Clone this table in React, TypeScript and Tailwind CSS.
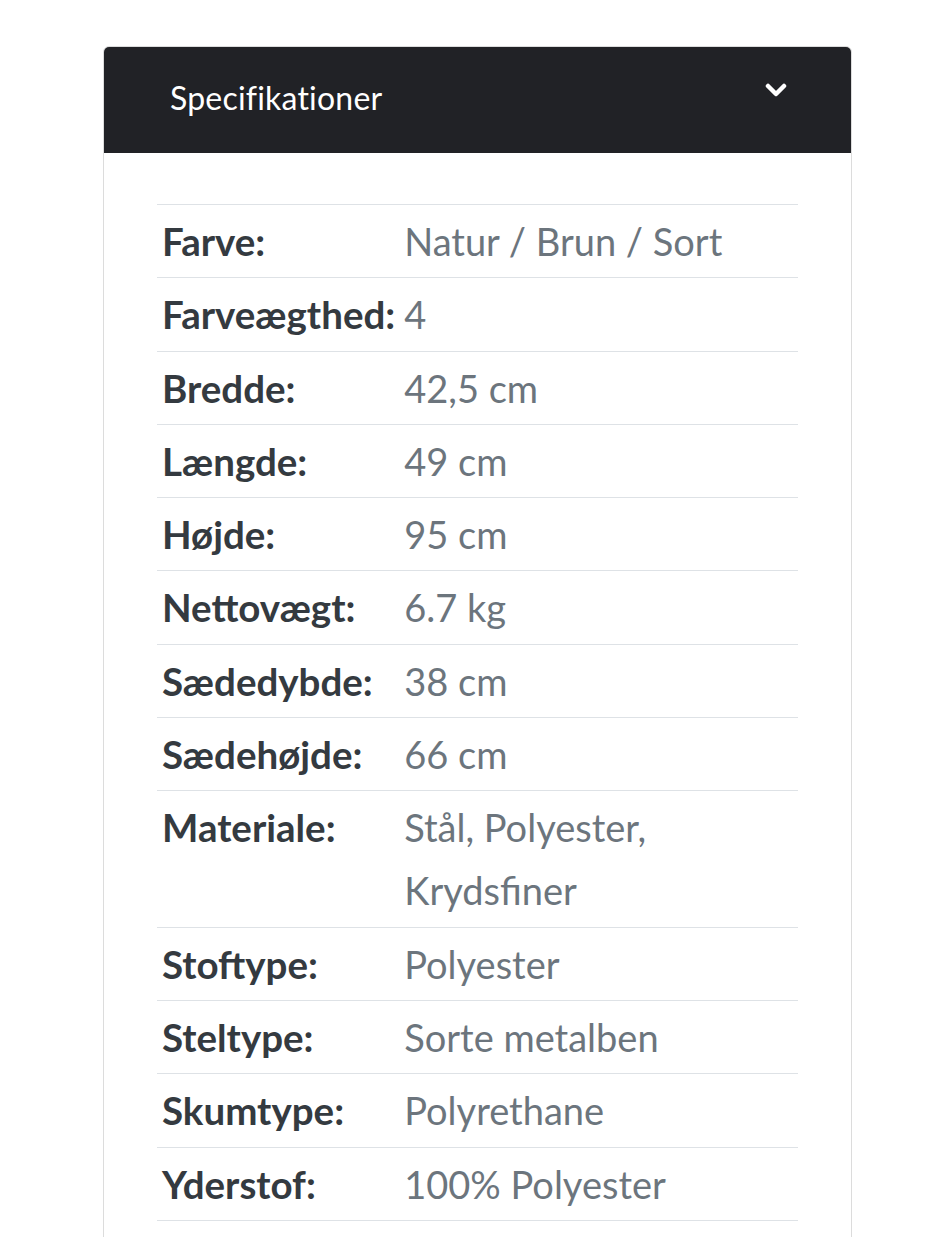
const specs = [
  { label: 'Farve:', value: 'Natur / Brun / Sort' },
  { label: 'Farveægthed:', value: '4' },
  { label: 'Bredde:', value: '42,5 cm' },
  { label: 'Længde:', value: '49 cm' },
  { label: 'Højde:', value: '95 cm' },
  { label: 'Nettovægt:', value: '6.7 kg' },
  { label: 'Sædedybde:', value: '38 cm' },
  { label: 'Sædehøjde:', value: '66 cm' },
  { label: 'Materiale:', value: 'Stål, Polyester, Krydsfiner' },
  { label: 'Stoftype:', value: 'Polyester' },
  { label: 'Steltype:', value: 'Sorte metalben' },
  { label: 'Skumtype:', value: 'Polyrethane' },
  { label: 'Yderstof:', value: '100% Polyester' },
]

const App = () => {
  return (
    <div className="min-h-screen bg-white pt-[46px] pl-[103px] font-['Lato',sans-serif]">
      <div className="w-[749px] rounded-[6px] border border-[#dcdcdc] overflow-hidden">
        {/* Header */}
        <div className="h-[106px] bg-[#212226] flex items-center justify-between pl-[66px] pr-[64px]">
          <span className="text-white text-[32px] leading-none tracking-[0.2px] -mt-[4px]">Specifikationer</span>
          <svg className="w-[22px] h-[16px] -mt-[20px]" viewBox="0 0 22 16" fill="none">
            <polyline points="3,4 11,12 19,4" stroke="white" strokeWidth="4.5" strokeLinecap="round" strokeLinejoin="round" />
          </svg>
        </div>

        {/* Body */}
        <div className="px-[53px] pt-[51px] pb-[52px] bg-white">
          <table className="w-full border-collapse">
            <tbody>
              {specs.map((spec) => (
                <tr key={spec.label} className="border-t border-b border-[#dee2e6]">
                  <td className="align-top pl-[5px] pr-[9px] pt-[5px] pb-[4.3px] text-[38.5px] leading-[63px] font-bold text-[#343a40] whitespace-nowrap w-[1%]">
                    {spec.label}
                  </td>
                  <td className="align-top pl-0 pr-[5px] pt-[5px] pb-[4.3px] text-[38px] leading-[63px] text-[#6c757d]">
                    {spec.label === 'Materiale:' ? (
                      <>
                        Stål, Polyester,
                        <br />
                        Krydsfiner
                      </>
                    ) : (
                      spec.value
                    )}
                  </td>
                </tr>
              ))}
            </tbody>
          </table>
        </div>
      </div>
    </div>
  )
}

export default App
